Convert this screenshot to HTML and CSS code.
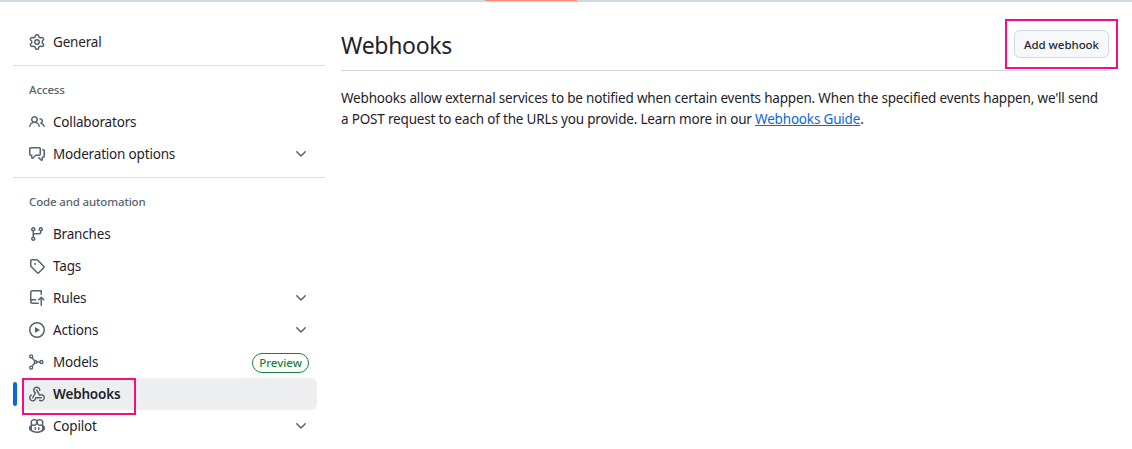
FILE: index.html
```html
<!DOCTYPE html>
<html>

<head>
    <title>Webhooks</title>
    <link rel="stylesheet" href="styles.css">
</head>

<body>

    <div class="topbar"><div class="topbar-mark"></div></div>

    <div class="page">

        <!-- Sidebar -->
        <nav class="sidebar">
            <a class="nav-item">
                <svg class="icon" viewBox="0 0 16 16"><path d="M8 0a8.2 8.2 0 0 1 .701.031C9.444.095 9.99.645 10.16 1.29l.288 1.107c.018.066.079.158.212.224.231.114.454.243.668.386.123.082.233.09.299.071l1.103-.303c.644-.176 1.392.021 1.82.63.27.385.506.792.704 1.218.315.675.111 1.422-.364 1.891l-.814.806c-.049.048-.098.147-.088.294.016.257.016.515 0 .772-.01.147.038.246.088.294l.814.806c.475.469.679 1.216.364 1.891a7.977 7.977 0 0 1-.704 1.217c-.428.61-1.176.807-1.82.63l-1.102-.302c-.067-.019-.177-.011-.3.071a5.909 5.909 0 0 1-.668.386c-.133.066-.194.158-.211.224l-.29 1.106c-.168.646-.715 1.196-1.458 1.26a8.006 8.006 0 0 1-1.402 0c-.743-.064-1.289-.614-1.458-1.26l-.289-1.106c-.018-.066-.079-.158-.212-.224a5.738 5.738 0 0 1-.668-.386c-.123-.082-.233-.09-.299-.071l-1.103.303c-.644.176-1.392-.021-1.82-.63a8.12 8.12 0 0 1-.704-1.218c-.315-.675-.111-1.422.363-1.891l.815-.806c.05-.048.098-.147.088-.294a6.214 6.214 0 0 1 0-.772c.01-.147-.038-.246-.088-.294l-.815-.806C.635 6.045.431 5.298.746 4.623a7.92 7.92 0 0 1 .704-1.217c.428-.61 1.176-.807 1.82-.63l1.102.302c.067.019.177.011.3-.071.214-.143.437-.272.668-.386.133-.066.194-.158.211-.224l.29-1.106C6.009.645 6.556.095 7.299.03 7.53.01 7.764 0 8 0Zm-.571 1.525c-.036.003-.108.036-.137.146l-.289 1.105c-.147.561-.549.967-.998 1.189-.173.086-.34.183-.5.29-.417.278-.97.423-1.529.27l-1.103-.303c-.109-.03-.175.016-.195.045-.22.312-.412.644-.573.99-.014.031-.021.11.059.19l.815.806c.411.406.562.957.53 1.456a4.709 4.709 0 0 0 0 .582c.032.499-.119 1.05-.53 1.456l-.815.806c-.081.08-.073.159-.059.19.162.346.353.677.573.989.02.03.085.076.195.046l1.102-.303c.56-.153 1.113-.008 1.53.27.161.107.328.204.501.29.447.222.85.629.997 1.189l.289 1.105c.029.109.101.143.137.146a6.6 6.6 0 0 0 1.142 0c.036-.003.108-.036.137-.146l.289-1.105c.147-.561.549-.967.998-1.189.173-.086.34-.183.5-.29.417-.278.97-.423 1.529-.27l1.103.303c.109.029.175-.016.195-.045.22-.313.411-.644.573-.99.014-.031.021-.11-.059-.19l-.815-.806c-.411-.406-.562-.957-.53-1.456a4.709 4.709 0 0 0 0-.582c-.032-.499.119-1.05.53-1.456l.815-.806c.081-.08.073-.159.059-.19a6.464 6.464 0 0 0-.573-.989c-.02-.03-.085-.076-.195-.046l-1.102.303c-.56.153-1.113.008-1.53-.27a4.44 4.44 0 0 0-.501-.29c-.447-.222-.85-.629-.997-1.189l-.289-1.105c-.029-.11-.101-.143-.137-.146a6.6 6.6 0 0 0-1.142 0ZM11 8a3 3 0 1 1-6 0 3 3 0 0 1 6 0ZM9.5 8a1.5 1.5 0 1 0-3.001.001A1.5 1.5 0 0 0 9.5 8Z"/></svg>
                <span class="nav-label">General</span>
            </a>

            <div class="nav-divider"></div>
            <div class="nav-heading">Access</div>

            <a class="nav-item">
                <svg class="icon" viewBox="0 0 16 16"><path d="M2 5.5a3.5 3.5 0 1 1 5.898 2.549 5.508 5.508 0 0 1 3.034 4.084.75.75 0 1 1-1.482.235 4 4 0 0 0-7.9 0 .75.75 0 0 1-1.482-.236A5.507 5.507 0 0 1 3.102 8.05 3.493 3.493 0 0 1 2 5.5ZM11 4a3.001 3.001 0 0 1 2.22 5.018 5.01 5.01 0 0 1 2.56 3.012.749.749 0 0 1-.885.954.752.752 0 0 1-.549-.514 3.507 3.507 0 0 0-2.522-2.372.75.75 0 0 1-.574-.73v-.352a.75.75 0 0 1 .416-.672A1.5 1.5 0 0 0 11 5.5.75.75 0 0 1 11 4Zm-5.5-.5a2 2 0 1 0-.001 3.999A2 2 0 0 0 5.5 3.5Z"/></svg>
                <span class="nav-label">Collaborators</span>
            </a>
            <a class="nav-item">
                <svg class="icon" viewBox="0 0 16 16"><path d="M1.75 1h8.5c.966 0 1.75.784 1.75 1.75v5.5A1.75 1.75 0 0 1 10.25 10H7.061l-2.574 2.573A1.458 1.458 0 0 1 2 11.543V10h-.25A1.75 1.75 0 0 1 0 8.25v-5.5C0 1.784.784 1 1.75 1ZM1.5 2.75v5.5c0 .138.112.25.25.25h1a.75.75 0 0 1 .75.75v2.19l2.72-2.72a.749.749 0 0 1 .53-.22h3.5a.25.25 0 0 0 .25-.25v-5.5a.25.25 0 0 0-.25-.25h-8.5a.25.25 0 0 0-.25.25Zm13 2a.25.25 0 0 0-.25-.25h-.5a.75.75 0 0 1 0-1.5h.5c.966 0 1.75.784 1.75 1.75v5.5A1.75 1.75 0 0 1 14.25 12H14v1.543a1.458 1.458 0 0 1-2.487 1.03L9.22 12.28a.749.749 0 0 1 .326-1.275.749.749 0 0 1 .734.215l2.22 2.22v-2.19a.75.75 0 0 1 .75-.75h1a.25.25 0 0 0 .25-.25Z"/></svg>
                <span class="nav-label">Moderation options</span>
                <svg class="chevron" viewBox="0 0 16 16"><path d="M12.78 5.22a.749.749 0 0 1 0 1.06l-4.25 4.25a.749.749 0 0 1-1.06 0L3.22 6.28a.749.749 0 1 1 1.06-1.06L8 8.939l3.72-3.719a.749.749 0 0 1 1.06 0Z"/></svg>
            </a>

            <div class="nav-divider"></div>
            <div class="nav-heading">Code and automation</div>

            <a class="nav-item">
                <svg class="icon" viewBox="0 0 16 16"><path d="M9.5 3.25a2.25 2.25 0 1 1 3 2.122V6A2.5 2.5 0 0 1 10 8.5H6a1 1 0 0 0-1 1v1.128a2.251 2.251 0 1 1-1.5 0V5.372a2.25 2.25 0 1 1 1.5 0v1.836A2.493 2.493 0 0 1 6 7h4a1 1 0 0 0 1-1v-.628A2.25 2.25 0 0 1 9.5 3.25Zm-6 0a.75.75 0 1 0 1.5 0 .75.75 0 0 0-1.5 0Zm8.25-.75a.75.75 0 1 0 0 1.5.75.75 0 0 0 0-1.5ZM4.25 12a.75.75 0 1 0 0 1.5.75.75 0 0 0 0-1.5Z"/></svg>
                <span class="nav-label">Branches</span>
            </a>
            <a class="nav-item">
                <svg class="icon" viewBox="0 0 16 16"><path d="M1 7.775V2.75C1 1.784 1.784 1 2.75 1h5.025c.464 0 .91.184 1.238.513l6.25 6.25a1.75 1.75 0 0 1 0 2.474l-5.026 5.026a1.75 1.75 0 0 1-2.474 0l-6.25-6.25A1.75 1.75 0 0 1 1 7.775Zm1.5 0c0 .066.026.13.073.177l6.25 6.25a.25.25 0 0 0 .354 0l5.025-5.025a.25.25 0 0 0 0-.354l-6.25-6.25a.25.25 0 0 0-.177-.073H2.75a.25.25 0 0 0-.25.25ZM6 5a1 1 0 1 1 0 2 1 1 0 0 1 0-2Z"/></svg>
                <span class="nav-label">Tags</span>
            </a>
            <a class="nav-item">
                <svg class="icon" viewBox="0 0 16 16"><path d="M1 2.5A2.5 2.5 0 0 1 3.5 0h8.75a.75.75 0 0 1 .75.75v3.5a.75.75 0 0 1-1.5 0V1.5h-8a1 1 0 0 0-1 1v6.708A2.493 2.493 0 0 1 3.5 9h3.25a.75.75 0 0 1 0 1.5H3.5a1 1 0 0 0 0 2h5.75a.75.75 0 0 1 0 1.5H3.5A2.5 2.5 0 0 1 1 11.5Zm13.23 7.79h-.001l-1.224-1.224v6.184a.75.75 0 0 1-1.5 0V9.066L10.28 10.29a.75.75 0 0 1-1.06-1.061l2.505-2.504a.75.75 0 0 1 1.06 0L15.29 9.23a.751.751 0 0 1-.018 1.042.751.751 0 0 1-1.042.018Z"/></svg>
                <span class="nav-label">Rules</span>
                <svg class="chevron" viewBox="0 0 16 16"><path d="M12.78 5.22a.749.749 0 0 1 0 1.06l-4.25 4.25a.749.749 0 0 1-1.06 0L3.22 6.28a.749.749 0 1 1 1.06-1.06L8 8.939l3.72-3.719a.749.749 0 0 1 1.06 0Z"/></svg>
            </a>
            <a class="nav-item">
                <svg class="icon" viewBox="0 0 16 16"><path d="M8 0a8 8 0 1 1 0 16A8 8 0 0 1 8 0ZM1.5 8a6.5 6.5 0 1 0 13 0 6.5 6.5 0 0 0-13 0Zm4.879-2.773 4.264 2.559a.25.25 0 0 1 0 .428l-4.264 2.559A.25.25 0 0 1 6 10.559V5.442a.25.25 0 0 1 .379-.215Z"/></svg>
                <span class="nav-label">Actions</span>
                <svg class="chevron" viewBox="0 0 16 16"><path d="M12.78 5.22a.749.749 0 0 1 0 1.06l-4.25 4.25a.749.749 0 0 1-1.06 0L3.22 6.28a.749.749 0 1 1 1.06-1.06L8 8.939l3.72-3.719a.749.749 0 0 1 1.06 0Z"/></svg>
            </a>
            <a class="nav-item">
                <svg class="icon icon-line" viewBox="0 0 16 16"><circle cx="2.2" cy="2.4" r="1.5"/><circle cx="2.2" cy="13.6" r="1.5"/><circle cx="6.6" cy="8" r="1.3"/><circle cx="12.4" cy="8" r="1.5"/><path d="M3 3.7 5.8 7M3 12.3 5.8 9M7.9 8h3"/></svg>
                <span class="nav-label">Models</span>
                <span class="badge">Preview</span>
            </a>
            <a class="nav-item active">
                <svg class="icon" viewBox="0 0 16 16"><path d="M5.5 4.25a2.25 2.25 0 0 1 4.5 0 .75.75 0 0 0 1.5 0 3.75 3.75 0 1 0-6.14 2.889l-2.272 4.258a.75.75 0 0 0 1.324.706L7 7.25a.75.75 0 0 0-.309-1.015A2.25 2.25 0 0 1 5.5 4.25Z"/><path d="M7.364 3.607a.75.75 0 0 1 1.03.257l2.608 4.349a3.75 3.75 0 1 1-.628 6.785.75.75 0 0 1 .752-1.299 2.25 2.25 0 1 0-.033-3.88.75.75 0 0 1-1.03-.256L7.107 4.636a.75.75 0 0 1 .257-1.03Z"/><path d="M2.9 8.776A.75.75 0 0 1 2.625 9.8 2.25 2.25 0 1 0 6 11.75a.75.75 0 0 1 .75-.751h5.5a.75.75 0 0 1 0 1.5H7.425a3.751 3.751 0 1 1-5.55-3.998.75.75 0 0 1 1.024.274Z"/></svg>
                <span class="nav-label">Webhooks</span>
                <span class="note-box note-nav"></span>
            </a>
            <a class="nav-item">
                <svg class="icon" viewBox="0 0 16 16"><path d="M7.998 15.035c-4.562 0-7.873-2.914-7.998-3.749V9.338c.085-.628.677-1.686 1.588-2.065.013-.07.024-.143.036-.218.029-.183.06-.384.126-.612-.201-.508-.254-1.084-.254-1.656 0-.87.128-1.769.693-2.484.579-.733 1.494-1.124 2.724-1.261 1.206-.134 2.262.034 2.944.765.05.053.096.108.139.165.044-.057.094-.112.143-.165.682-.731 1.738-.899 2.944-.765 1.23.137 2.145.528 2.724 1.261.566.715.693 1.614.693 2.484 0 .572-.053 1.148-.254 1.656.066.228.098.429.126.612.012.076.024.148.037.218.924.385 1.522 1.471 1.591 2.095v1.872c0 .766-3.351 3.795-8.002 3.795Zm0-1.485c2.28 0 4.584-1.11 5.002-1.433V7.862l-.023-.116c-.49.21-1.075.291-1.727.291-1.146 0-2.059-.327-2.71-.991A3.222 3.222 0 0 1 8 6.303a3.24 3.24 0 0 1-.544.743c-.65.664-1.563.991-2.71.991-.652 0-1.236-.081-1.727-.291l-.023.116v4.255c.419.323 2.722 1.433 5.002 1.433ZM6.762 2.83c-.193-.206-.637-.413-1.682-.297-1.019.113-1.479.404-1.713.7-.247.312-.369.789-.369 1.554 0 .793.129 1.171.308 1.371.162.181.519.379 1.442.379.853 0 1.339-.235 1.638-.54.315-.322.527-.827.617-1.553.117-.935-.037-1.395-.241-1.614Zm4.155-.297c-1.044-.116-1.488.091-1.681.297-.204.219-.359.679-.242 1.614.091.726.303 1.231.618 1.553.299.305.784.54 1.638.54.922 0 1.28-.198 1.442-.379.179-.2.308-.578.308-1.371 0-.765-.123-1.242-.37-1.554-.233-.296-.693-.587-1.713-.7Z"/><path d="M6.25 9.037a.75.75 0 0 1 .75.75v1.501a.75.75 0 0 1-1.5 0V9.787a.75.75 0 0 1 .75-.75Zm4.25.75v1.501a.75.75 0 0 1-1.5 0V9.787a.75.75 0 0 1 1.5 0Z"/></svg>
                <span class="nav-label">Copilot</span>
                <svg class="chevron" viewBox="0 0 16 16"><path d="M12.78 5.22a.749.749 0 0 1 0 1.06l-4.25 4.25a.749.749 0 0 1-1.06 0L3.22 6.28a.749.749 0 1 1 1.06-1.06L8 8.939l3.72-3.719a.749.749 0 0 1 1.06 0Z"/></svg>
            </a>
        </nav>

        <!-- Main content -->
        <main class="content">
            <div class="content-header">
                <h1>Webhooks</h1>
                <button class="btn">Add webhook<span class="note-box note-btn"></span></button>
            </div>
            <p>Webhooks allow external services to be notified when certain events happen. When the specified events happen, we'll send a POST request to each of the URLs you provide. Learn more in our <a class="link">Webhooks Guide</a>.</p>
        </main>

    </div>

</body>

</html>
```

FILE: styles.css
```css
html,
body {
    height: 100%;
}

body {
    margin: 0;
    overflow: hidden;
    background-color: #fff;
    color: #1f2328;
    font-family: "Noto Sans", sans-serif;
    font-size: 13.5px;
}

.topbar {
    height: 2px;
    background-color: #d1d9e0;
}

.topbar-mark {
    width: 92px;
    height: 1px;
    margin-left: 485px;
    background-color: #fd8c73;
}

.page {
    display: flex;
    padding: 24px 23px 0 13px;
}

.sidebar {
    width: 312px;
    flex-shrink: 0;
}

.nav-item {
    position: relative;
    display: flex;
    align-items: center;
    height: 32px;
    margin: 0 8px 0 9px;
    padding: 0 8px 0 7px;
    border-radius: 6px;
}

.nav-item.active {
    background-color: #eceef0;
    font-weight: 600;
}

.nav-item.active::before {
    content: "";
    position: absolute;
    left: -9px;
    top: 4px;
    width: 4px;
    height: 24px;
    border-radius: 6px;
    background-color: #0969da;
}

.icon {
    width: 16px;
    height: 16px;
    margin-right: 8px;
    fill: #59636e;
    flex-shrink: 0;
}

.icon-line {
    fill: none;
    stroke: #59636e;
    stroke-width: 1.4;
}

.nav-label {
    flex: 1;
    letter-spacing: -0.18px;
}

.chevron {
    width: 16px;
    height: 16px;
    fill: #59636e;
}

.nav-divider {
    height: 1px;
    margin: 7px 0 0;
    background-color: #d8dee4;
}

.nav-heading {
    height: 16px;
    margin: 16px 0 8px 16px;
    color: #59636e;
    font-size: 11.5px;
    font-weight: 500;
    line-height: 16px;
    letter-spacing: -0.15px;
}

.badge {
    margin-top: 1px;
    padding: 0 6px;
    border: 1px solid #1a7f37;
    border-radius: 10px;
    color: #1a7f37;
    font-size: 11.5px;
    font-weight: 500;
    line-height: 18px;
}

.content {
    flex: 1;
    margin-left: 16px;
}

.content-header {
    display: flex;
    align-items: center;
    justify-content: space-between;
    height: 44px;
    border-bottom: 1px solid #d1d9e0;
}

h1 {
    margin: 0 0 6px;
    font-size: 23px;
    font-weight: 400;
    line-height: 36px;
    letter-spacing: -0.3px;
}

.btn {
    position: relative;
    width: 95px;
    height: 28px;
    margin-bottom: 8px;
    padding: 0;
    border: 1px solid #d1d9e0;
    border-radius: 6px;
    background-color: #f6f8fa;
    color: #25292e;
    font-family: inherit;
    font-size: 11.5px;
    font-weight: 500;
    letter-spacing: -0.05px;
}

p {
    margin: 17px 0 0;
    padding-right: 3px;
    line-height: 21px;
    letter-spacing: -0.18px;
}

.link {
    color: #0969da;
    text-decoration: underline;
}

/* pink annotation boxes */
.note-box {
    position: absolute;
    box-sizing: border-box;
    border: 2px solid #f50e7e;
    pointer-events: none;
}

.note-nav {
    left: 0;
    top: 0;
    width: 114px;
    height: 37px;
}

.note-btn {
    left: -10px;
    top: -12px;
    width: 113px;
    height: 50px;
}
```
